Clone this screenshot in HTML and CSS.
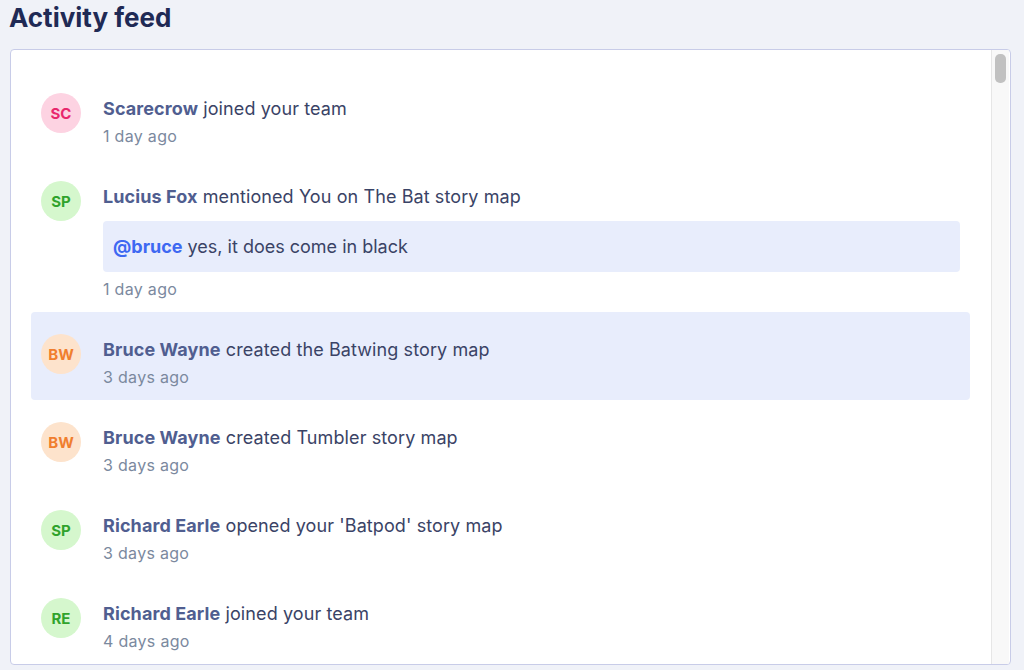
FILE: index.html
```html
<!DOCTYPE html>
<html lang="en">
<head>
    <meta charset="UTF-8">
    <title>Activity feed</title>
    <link rel="stylesheet" href="styles.css">
</head>
<body>
    <h1 class="page-title">Activity feed</h1>

    <div class="feed-panel">
        <ul class="feed-list">
            <li class="feed-item">
                <span class="avatar pink">SC</span>
                <div class="feed-body">
                    <p class="feed-text"><b>Scarecrow</b> joined your team</p>
                    <p class="feed-time">1 day ago</p>
                </div>
            </li>
            <li class="feed-item">
                <span class="avatar green">SP</span>
                <div class="feed-body">
                    <p class="feed-text"><b>Lucius Fox</b> mentioned You on The Bat story map</p>
                    <div class="feed-comment"><span class="mention">@bruce</span> yes, it does come in black</div>
                    <p class="feed-time">1 day ago</p>
                </div>
            </li>
            <li class="feed-item active">
                <span class="avatar orange">BW</span>
                <div class="feed-body">
                    <p class="feed-text"><b>Bruce Wayne</b> created the Batwing story map</p>
                    <p class="feed-time">3 days ago</p>
                </div>
            </li>
            <li class="feed-item">
                <span class="avatar orange">BW</span>
                <div class="feed-body">
                    <p class="feed-text"><b>Bruce Wayne</b> created Tumbler story map</p>
                    <p class="feed-time">3 days ago</p>
                </div>
            </li>
            <li class="feed-item">
                <span class="avatar green">SP</span>
                <div class="feed-body">
                    <p class="feed-text"><b>Richard Earle</b> opened your 'Batpod' story map</p>
                    <p class="feed-time">3 days ago</p>
                </div>
            </li>
            <li class="feed-item">
                <span class="avatar green">RE</span>
                <div class="feed-body">
                    <p class="feed-text"><b>Richard Earle</b> joined your team</p>
                    <p class="feed-time">4 days ago</p>
                </div>
            </li>
        </ul>

        <!-- Scrollbar -->
        <div class="scroll-track">
            <div class="scroll-thumb"></div>
        </div>
    </div>
</body>
</html>
```

FILE: styles.css
```css
* { margin: 0; padding: 0; box-sizing: border-box; }
body {
    font-family: Inter, "Noto Sans", sans-serif;
    background: #f0f2f8;
    padding: 0 13px 0 10px;
    color: #3a4366;
}
.page-title {
    font-size: 26px;
    line-height: 36px;
    color: #1f2a55;
    font-weight: 700;
    margin-left: -1px;
    margin-bottom: 13px;
}

/* Panel */
.feed-panel {
    display: flex;
    height: 616px;
    background: #fff;
    border: 1px solid #c8cce8;
    border-radius: 4px;
    overflow: hidden;
}
.scroll-track {
    flex: none;
    width: 18px;
    margin-right: 1px;
    background: #f8f8f8;
    border-left: 1px solid #e6e6e6;
    padding: 4px 3px 0 3px;
}
.scroll-thumb { height: 29px; background: #c1c1c1; border-radius: 5px; }

/* Feed */
.feed-list { flex: 1; list-style: none; padding: 21px 21px 0 20px; }
.feed-item {
    display: flex;
    gap: 22px;
    padding: 22px 10px 11px;
    border-radius: 4px;
}
.feed-item.active { background: #e8edfc; }
.avatar {
    flex: none;
    width: 40px;
    height: 40px;
    border-radius: 50%;
    display: flex;
    align-items: center;
    justify-content: center;
    font-size: 15px;
    font-weight: 700;
}
.avatar.pink { background: #fdd3e2; color: #e8276c; }
.avatar.green { background: #d5f7cd; color: #30a32c; }
.avatar.orange { background: #fde3cc; color: #f07e2e; }
.feed-body { flex: 1; padding-top: 3px; }
.feed-text { font-size: 18px; line-height: 26px; letter-spacing: 0.1px; }
.feed-text b { color: #505e90; font-weight: 700; }
.feed-time {
    font-size: 16px;
    line-height: 24px;
    padding-top: 2px;
    letter-spacing: 0.3px;
    color: #7b899e;
}
.feed-comment {
    background: #e8edfc;
    border-radius: 4px;
    font-size: 18px;
    line-height: 27px;
    padding: 12px 10px;
    margin: 11px 0 3px;
}
.mention { color: #3d68f2; font-weight: 700; }
```
